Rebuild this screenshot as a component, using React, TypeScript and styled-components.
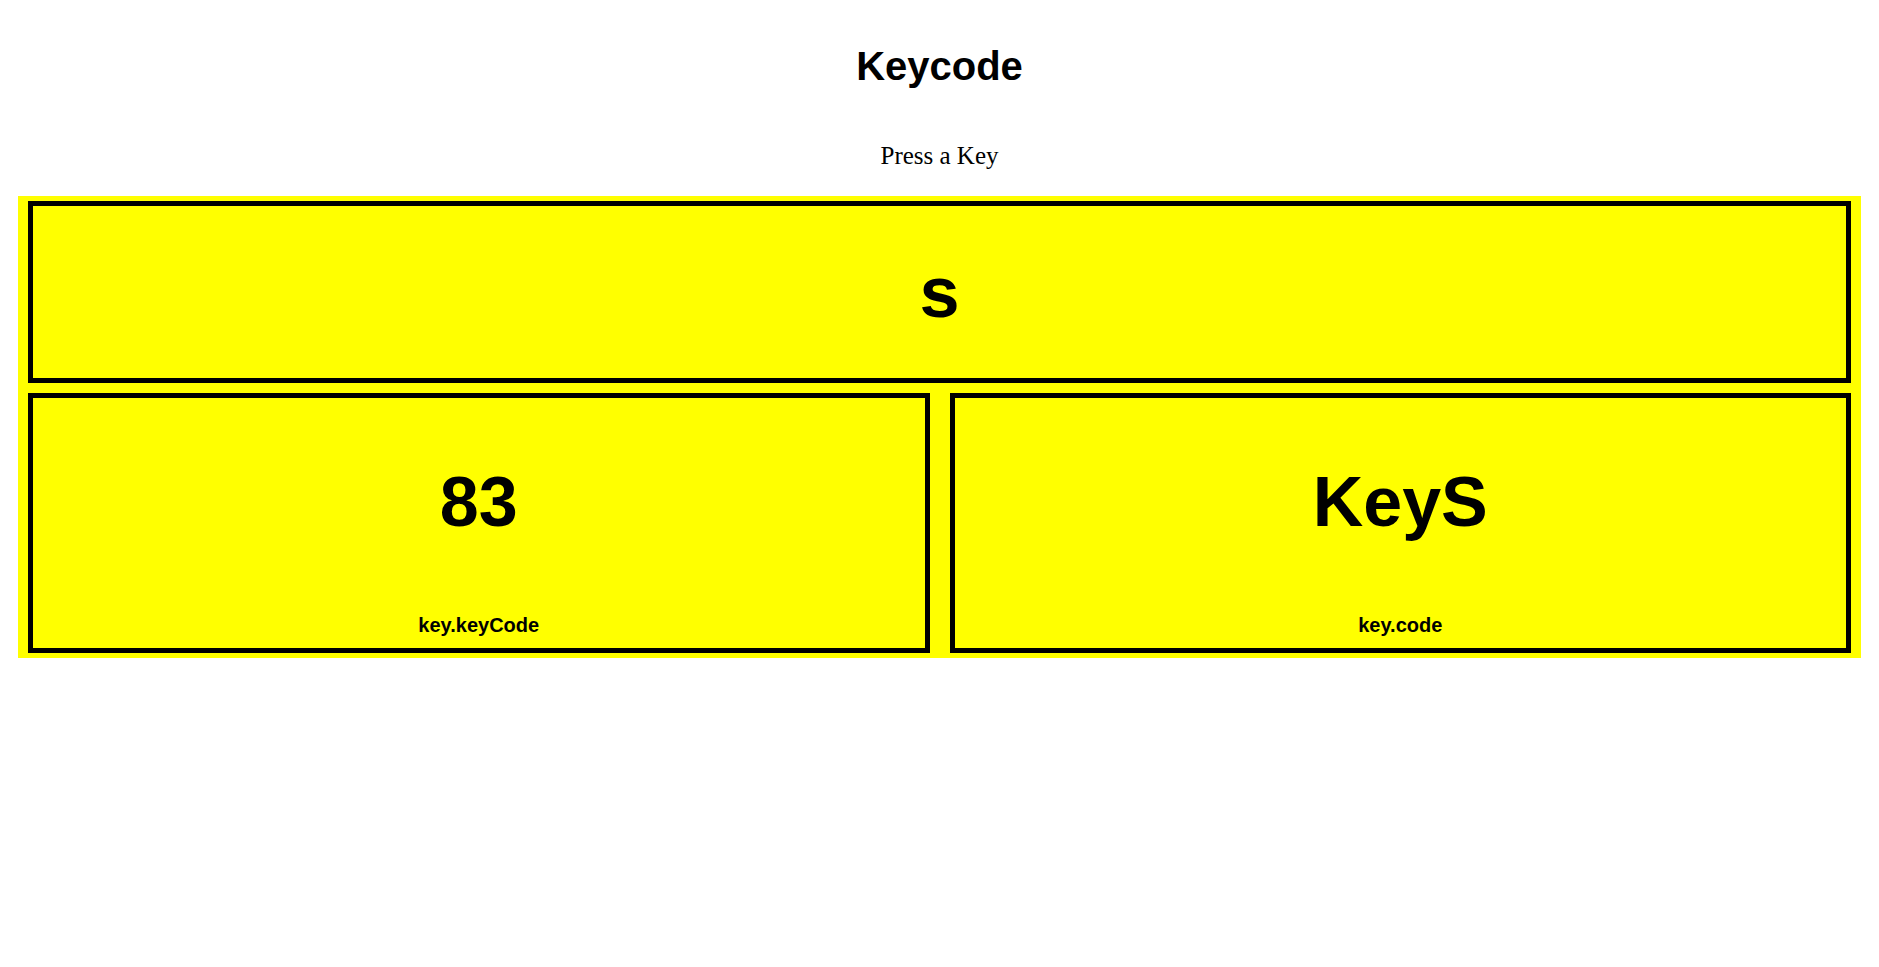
import styled, { createGlobalStyle } from "styled-components";

const GlobalStyle = createGlobalStyle`
  html, body {
    margin: 0;
    padding: 0;
    background: #ffffff;
  }
  body {
    font-family: "Liberation Serif", "Times New Roman", serif;
    color: #000000;
  }
`;

const keys = [
  { value: "83", label: "key.keyCode" },
  { value: "KeyS", label: "key.code" },
];

export default function App() {
  return (
    <>
      <GlobalStyle />
      <Page>
        <Title>Keycode</Title>
        <Hint>Press a Key</Hint>
        <Board>
          <KeyTile>
            <KeyChar>s</KeyChar>
          </KeyTile>
          {keys.map((k) => (
            <InfoTile key={k.label}>
              <Value>{k.value}</Value>
              <Label>{k.label}</Label>
            </InfoTile>
          ))}
        </Board>
      </Page>
    </>
  );
}

const Page = styled.div`
  display: flex;
  flex-direction: column;
  align-items: stretch;
  padding: 44px 18px 0;
`;

const Title = styled.h1`
  margin: 0;
  text-align: center;
  font-family: "Liberation Sans", Arial, sans-serif;
  font-size: 40px;
  font-weight: 700;
`;

const Hint = styled.p`
  margin: 53px 0 0;
  text-align: center;
  font-size: 25px;
`;

const Board = styled.div`
  display: grid;
  grid-template-columns: 1fr 1fr;
  margin-top: 26px;
  background: #ffff00;
  font-family: "Liberation Sans", Arial, sans-serif;
  font-weight: 700;
`;

const Tile = styled.div`
  box-sizing: border-box;
  margin: 5px 10px;
  border: 5px solid #000000;
  display: flex;
  flex-direction: column;
  align-items: center;
`;

const KeyTile = styled(Tile)`
  grid-column: 1 / span 2;
  height: 182px;
  justify-content: center;
`;

const InfoTile = styled(Tile)`
  height: 260px;
  justify-content: space-between;
  padding: 64px 0 11px;
`;

const KeyChar = styled.div`
  font-size: 72px;
`;

const Value = styled.div`
  font-size: 70px;
`;

const Label = styled.div`
  font-size: 20px;
`;
